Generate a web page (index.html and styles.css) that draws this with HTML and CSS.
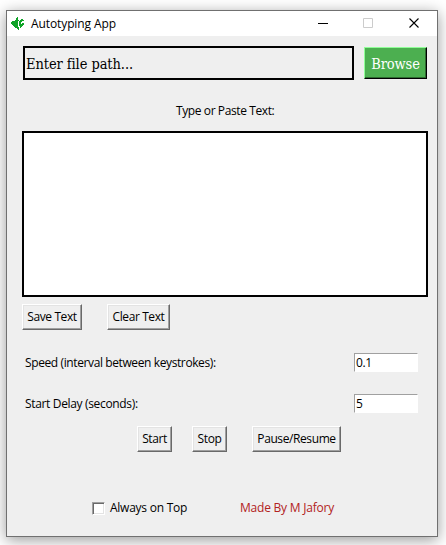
FILE: index.html
```html
<!DOCTYPE html>
<html lang="en">
<head>
<meta charset="utf-8">
<title>Autotyping App</title>
<link rel="stylesheet" href="styles.css">
</head>
<body>
<main class="window">
  <header class="titlebar">
    <svg class="logo" width="14" height="14" viewBox="0 0 14 14" shape-rendering="crispEdges"><path fill="#0fa428" d="M0 5h1V4h3V3h1V1h1V0h1v3h1v1H7v6h1v3H7v-1H6v-1H4v-1H3V9H2V8H1V7H0zM8 4h1V3h1V2h2v1h1v1h-2v1h-1v2h1V6h2v2h-1v1h-1v1h-1v1H9V9H8z"/></svg>
    <h1 class="title">Autotyping App</h1>
    <svg class="controls" width="104" height="12" viewBox="0 0 104 12" fill="none"><path d="M0 6.500h10" stroke="#000"/><path d="M45.500 1.500h9v9h-9z" stroke="#ccc"/><path d="M91.500 1.500l9 9M100.500 1.500l-9 9" stroke="#000" stroke-width="1.100"/></svg>
  </header>
  <div class="file-row">
    <div class="path">Enter file path...</div>
    <button class="browse">Browse</button>
  </div>
  <p class="caption">Type or Paste Text:</p>
  <div class="editor"></div>
  <div class="text-actions">
    <button class="btn save">Save Text</button>
    <button class="btn clear">Clear Text</button>
  </div>
  <div class="setting speed"><span>Speed (interval between keystrokes):</span><div class="field">0.1</div></div>
  <div class="setting delay"><span>Start Delay (seconds):</span><div class="field">5</div></div>
  <div class="run-actions">
    <button class="btn start">Start</button>
    <button class="btn stop">Stop</button>
    <button class="btn pause">Pause/Resume</button>
  </div>
  <footer class="footer">
    <span class="check"></span>
    <span class="top-label">Always on Top</span>
    <span class="credit">Made By M Jafory</span>
  </footer>
</main>
</body>
</html>
```
FILE: styles.css
```css
* { box-sizing: border-box; }
body {
  margin: 0;
  height: 545px;
  padding: 10px 0 0 6px;
  overflow: hidden;
  background: #fff;
  font: 12px/16px "Open Sans", "Noto Sans", sans-serif;
  letter-spacing: -0.4px;
  color: #000;
}
.window {
  width: 432px;
  height: 527px;
  border: 1px solid #707070;
  background: #efefef;
  box-shadow: 0 3px 14px rgba(0, 0, 0, 0.4);
  white-space: nowrap;
}
.titlebar {
  height: 25px;
  padding: 0 15px 0 4px;
  display: flex;
  align-items: center;
  background: #fff;
}
.title { margin: 0 0 0 6px; font-size: 12px; font-weight: 400; letter-spacing: -0.1px; }
.controls { margin: 0 0 1px auto; }
.file-row { display: flex; align-items: center; gap: 10px; margin: 10px 0 0 16px; }
.path, .browse { font-family: "DejaVu Serif Condensed", "DejaVu Serif", serif; font-size: 14.5px; }
.path { width: 331px; height: 34px; padding-left: 1px; border: 2px solid #000; line-height: 32px; letter-spacing: -0.08px; }
.browse {
  width: 63px;
  height: 32px;
  padding: 2px 0 0;
  border: solid;
  border-width: 1px;
  border-color: #90ff98 #000 #000 #90ff98;
  box-shadow: inset -1px -1px #2d6b30;
  background: #4caf50;
  color: #fff;
  letter-spacing: -0.1px;
}
.caption { margin: 23px 0 0 169px; height: 16px; }
.editor { width: 406px; height: 166px; margin: 12px 0 0 15px; border: 2px solid #000; background: #fff; }
.text-actions { display: flex; gap: 25px; margin: 7px 0 0 15px; }
.btn {
  height: 26px;
  padding: 0;
  border: 1px solid;
  border-color: #fff #696969 #696969 #fff;
  box-shadow: inset -1px -1px #a0a0a0, inset 1px 1px #e3e3e3;
  background: #efefef;
  color: #000;
  font: inherit;
  letter-spacing: inherit;
}
.save { width: 60px; }
.clear { width: 63px; }
.setting { display: flex; justify-content: space-between; align-items: center; height: 19px; margin: 0 19px 0 18px; }
.speed { margin-top: 23px; letter-spacing: -0.39px; }
.delay { margin-top: 22px; letter-spacing: -0.34px; }
.field {
  width: 64px;
  height: 19px;
  padding-left: 1px;
  border: 1px solid;
  border-color: #a0a0a0 #fff #fff #a0a0a0;
  background: #fff;
  line-height: 17px;
}
.run-actions { display: flex; margin: 13px 0 0 130px; }
.start, .stop { width: 35px; }
.stop { margin-left: 20px; }
.pause { width: 89px; margin-left: 25px; }
.footer { display: flex; align-items: center; height: 16px; margin: 48px 0 0 85px; }
.check {
  width: 13px;
  height: 13px;
  border: 1px solid;
  border-color: #a0a0a0 #fff #fff #a0a0a0;
  box-shadow: inset 1px 1px #696969, inset -1px -1px #e3e3e3;
  background: #fff;
}
.top-label { width: 130px; margin-left: 5px; letter-spacing: -0.25px; }
.credit { color: #b22222; letter-spacing: -0.22px; }
```
